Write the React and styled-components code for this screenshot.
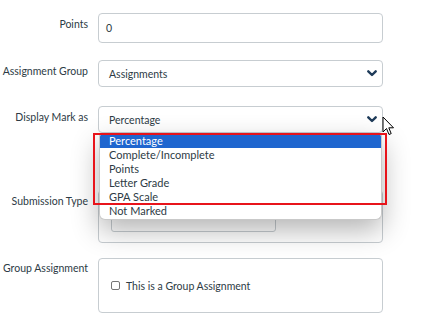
import React from 'react';
import styled, { createGlobalStyle } from 'styled-components';

const GlobalStyle = createGlobalStyle`
  html, body {
    margin: 0;
    padding: 0;
    background: #fff;
  }
  body {
    font-family: Lato, "Open Sans", sans-serif;
    color: #2d3b45;
  }
`;

const Page = styled.div`
  width: 436px;
  height: 324px;
  overflow: hidden;
  padding-top: 13px;
  box-sizing: border-box;
`;

const Row = styled.div`
  display: grid;
  grid-template-columns: 88px 285px;
  column-gap: 10px;
  margin-bottom: ${p => p.gap || 0}px;
`;

const Label = styled.div`
  text-align: right;
  font-size: 10.5px;
  line-height: 14px;
  padding-top: ${p => p.top || 4}px;
  white-space: nowrap;
`;

const Field = styled.div`
  position: relative;
`;

const Input = styled.div`
  height: ${p => p.h || 30}px;
  box-sizing: border-box;
  border: 1px solid #c7cdd1;
  border-radius: 4px;
  display: flex;
  align-items: center;
  padding: 0 5px 0 ${p => p.pl || 7}px;
  font-size: 10.5px;
  justify-content: space-between;
  background: #fff;
`;

const Chevron = () => (
  <svg width="10" height="7" viewBox="0 0 10 7">
    <path d="M1.3 1.3 L5 5 L8.7 1.3" fill="none" stroke="#1f3c5a" strokeWidth="2.4" strokeLinecap="round" strokeLinejoin="round" />
  </svg>
);

const Fieldset = styled.div`
  height: ${p => p.h}px;
  box-sizing: border-box;
  border: 1px solid #c7cdd1;
  border-radius: 4px;
  padding: ${p => p.pad || '13px 12px'};
  display: flex;
  align-items: ${p => p.center ? 'center' : 'flex-start'};
`;

const InnerSelect = styled.div`
  width: 165px;
  height: 28px;
  box-sizing: border-box;
  border: 1px solid #c7cdd1;
  border-radius: 3px;
`;

const CheckRow = styled.label`
  display: flex;
  align-items: center;
  gap: 6px;
  font-size: 10.5px;
`;

const Box = styled.span`
  width: 9px;
  height: 9px;
  box-sizing: border-box;
  border: 1px solid #767676;
  border-radius: 2px;
  background: #fff;
`;

const ListBox = styled.ul`
  position: absolute;
  top: 28px;
  left: 1px;
  width: 283px;
  height: 86px;
  margin: 0;
  padding: 0;
  list-style: none;
  background: #fff;
  border: 1px solid #c9c9c9;
  border-top: none;
  border-radius: 0 0 6px 6px;
  box-sizing: border-box;
  box-shadow: 0 10px 28px rgba(0, 0, 0, 0.3);
  z-index: 5;
`;

const Option = styled.li`
  height: 14px;
  line-height: 14px;
  font-size: 11px;
  padding-left: 9px;
  color: ${p => p.selected ? '#fff' : '#2d3b45'};
  background: ${p => p.selected ? '#1f66cf' : 'transparent'};
  border-radius: ${p => p.selected ? '3px 3px 0 0' : '0'};
`;

const Highlight = styled.div`
  position: absolute;
  top: 27px;
  left: -5px;
  width: 294px;
  height: 72px;
  border: 2px solid #e8141b;
  box-sizing: border-box;
  z-index: 6;
  pointer-events: none;
`;

const Pointer = styled.svg`
  position: absolute;
  top: 10px;
  left: 284px;
  z-index: 7;
`;

const options = ['Percentage', 'Complete/Incomplete', 'Points', 'Letter Grade', 'GPA Scale', 'Not Marked'];

export default function App() {
  return (
    <Page>
      <GlobalStyle />
      <Row gap={17}>
        <Label top={4}>Points</Label>
        <Input h={30}>0</Input>
      </Row>
      <Row gap={19}>
        <Label top={4}>Assignment Group</Label>
        <Input h={27} pl={10}>Assignments<Chevron /></Input>
      </Row>
      <Row gap={57}>
        <Label top={4}>Display Mark as</Label>
        <Field>
          <Input h={27} pl={10}>Percentage<Chevron /></Input>
          <ListBox>
            {options.map((o, i) => (
              <Option key={o} selected={i === 0}>{o}</Option>
            ))}
          </ListBox>
          <Highlight />
          <Pointer width="13" height="20" viewBox="0 0 13 20">
            <path d="M1 1 L1 16 L4.5 12.5 L7 18.5 L9.2 17.6 L6.8 11.8 L11.5 11.8 Z" fill="#fff" stroke="#000" strokeWidth="1" strokeLinejoin="round" />
          </Pointer>
        </Field>
      </Row>
      <Row gap={15}>
        <Label top={4}>Submission Type</Label>
        <Fieldset h={53}>
          <InnerSelect />
        </Fieldset>
      </Row>
      <Row>
        <Label top={3}>Group Assignment</Label>
        <Fieldset h={55} center pad="0 12px">
          <CheckRow>
            <Box />
            This is a Group Assignment
          </CheckRow>
        </Fieldset>
      </Row>
    </Page>
  );
}
